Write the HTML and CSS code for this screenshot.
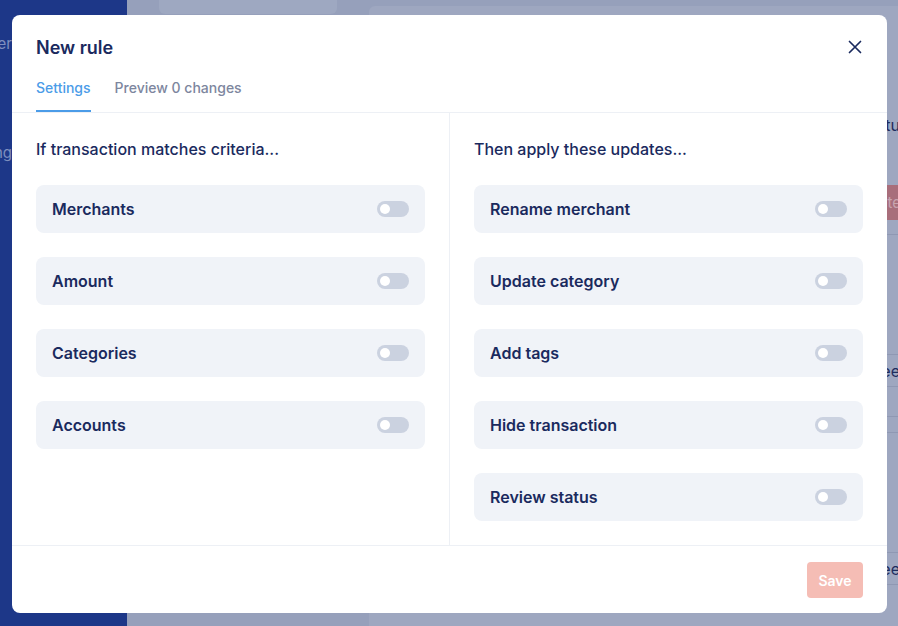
FILE: index.html
```html
<!DOCTYPE html>
<html>
<head>
<meta charset="utf-8">
<link rel="stylesheet" href="styles.css">
</head>
<body>
<div class="app">
  <aside class="sidebar">
    <div class="side-item">Transfer</div>
    <div class="side-item">Planning</div>
  </aside>
  <main class="main">
    <div class="top-panel"></div>
    <div class="content-panel">
      <div class="bg-row r1"><span class="bg-text">Statu</span></div>
      <div class="bg-row r2"><span class="bg-btn">Delete</span></div>
      <div class="bg-row r3"></div>
      <div class="bg-row r4"><span class="bg-text">Nee</span></div>
      <div class="bg-row r5"></div>
      <div class="bg-row r6"></div>
      <div class="bg-row r7"></div>
      <div class="bg-row r4"><span class="bg-text">Nee</span></div>
    </div>
  </main>
</div>

<div class="modal">
  <header class="modal-header">
    <div class="title-row">
      <h1 class="title">New rule</h1>
      <button class="close" aria-label="Close">
        <svg width="14" height="14" viewBox="0 0 14 14"><path d="M1.5 1.5 L12.5 12.5 M12.5 1.5 L1.5 12.5" stroke="#1a2a5e" stroke-width="1.7" stroke-linecap="round" fill="none"/></svg>
      </button>
    </div>
    <nav class="tabs">
      <span class="tab active">Settings</span>
      <span class="tab">Preview 0 changes</span>
    </nav>
  </header>
  <section class="modal-body">
    <div class="col">
      <h2 class="col-title">If transaction matches criteria...</h2>
      <div class="cards">
        <div class="card"><span>Merchants</span><span class="toggle"></span></div>
        <div class="card"><span>Amount</span><span class="toggle"></span></div>
        <div class="card"><span>Categories</span><span class="toggle"></span></div>
        <div class="card"><span>Accounts</span><span class="toggle"></span></div>
      </div>
    </div>
    <div class="col col-right">
      <h2 class="col-title">Then apply these updates...</h2>
      <div class="cards">
        <div class="card"><span>Rename merchant</span><span class="toggle"></span></div>
        <div class="card"><span>Update category</span><span class="toggle"></span></div>
        <div class="card"><span>Add tags</span><span class="toggle"></span></div>
        <div class="card"><span>Hide transaction</span><span class="toggle"></span></div>
        <div class="card"><span>Review status</span><span class="toggle"></span></div>
      </div>
    </div>
  </section>
  <footer class="modal-footer">
    <button class="save">Save</button>
  </footer>
</div>
</body>
</html>
```

FILE: styles.css
```css
* { box-sizing: border-box; }
html, body { margin: 0; padding: 0; }
body {
  width: 898px;
  height: 626px;
  overflow: hidden;
  font-family: Inter, "Noto Sans", sans-serif;
  background: #96a0bb;
  position: relative;
}
.app {
  display: flex;
  height: 626px;
}
.sidebar {
  width: 127px;
  flex: none;
  background: #1d3788;
  padding-top: 34px;
  display: flex;
  flex-direction: column;
  gap: 90px;
}
.side-item {
  color: #7f8fbf;
  font-size: 15px;
  line-height: 19px;
  width: 100px;
  margin-left: -88px;
  text-align: right;
}
.main {
  flex: 1;
  display: flex;
  position: relative;
  padding-left: 32px;
  gap: 32px;
}
.top-panel {
  width: 178px;
  height: 14px;
  background: #9ea8c1;
  border-radius: 0 0 6px 6px;
}
.content-panel {
  flex: 1;
  margin-top: 6px;
  background: #9ea7c0;
  border-radius: 6px 0 0 0;
  padding-top: 102px;
  display: flex;
  flex-direction: column;
}
.bg-row {
  width: 100%;
  display: flex;
  justify-content: flex-end;
  align-items: center;
  border-bottom: 1px solid #8f98b3;
  flex: none;
}
.bg-text { color: #1d2c5e; font-size: 16px; margin-right: -2px; }
.r1 { height: 34px; border-bottom: none; }
.r2 { height: 93px; align-items: flex-end; padding-bottom: 14px; }
.r2 .bg-btn {
  background: #a86e7b;
  color: #c9a5b0;
  font-size: 15px;
  line-height: 21px;
  padding: 7px 0 7px 4px;
  margin-right: -3px;
}
.r3 { height: 120px; }
.r4 { height: 32px; }
.r5 { height: 30px; }
.r6 { height: 16px; }
.r7 { height: 120px; }

/* Modal */
.modal {
  position: absolute;
  left: 12px;
  top: 15px;
  width: 875px;
  height: 598px;
  background: #fff;
  border-radius: 8px;
  display: flex;
  flex-direction: column;
  color: #1a2a5e;
}
.modal-header {
  padding: 20px 24px 0;
  border-bottom: 1px solid #edf0f5;
}
.title-row {
  display: flex;
  justify-content: space-between;
  align-items: center;
  height: 24px;
}
.title {
  margin: 0;
  font-size: 18px;
  font-weight: 600;
}
.close {
  border: none;
  background: none;
  padding: 0;
  width: 14px;
  height: 14px;
  display: flex;
  margin-right: 1px;
}
.tabs {
  display: flex;
  gap: 24px;
  margin-top: 19px;
}
.tab {
  font-size: 14px;
  font-weight: 500;
  color: #7d869e;
  line-height: 20px;
  padding-bottom: 12px;
  border-bottom: 2px solid transparent;
}
.tab.active {
  color: #4b9ce8;
  border-bottom-color: #4b9ce8;
}
.modal-body {
  flex: 1;
  display: flex;
  border-bottom: 1px solid #edf0f5;
}
.col {
  flex: 1;
  padding: 24px;
}
.col-right { border-left: 1px solid #edf0f5; }
.col-title {
  margin: 0 0 24px;
  font-size: 16px;
  font-weight: 550;
  line-height: 24px;
}
.cards {
  display: flex;
  flex-direction: column;
  gap: 24px;
}
.card {
  height: 48px;
  background: #f0f3f8;
  border-radius: 8px;
  display: flex;
  align-items: center;
  justify-content: space-between;
  padding: 0 16px;
  font-size: 16px;
  font-weight: 560;
}
.toggle {
  width: 32px;
  height: 16px;
  border-radius: 8px;
  background: #cbd2e0;
  position: relative;
}
.toggle::after {
  content: "";
  position: absolute;
  left: 3px;
  top: 3px;
  width: 10px;
  height: 10px;
  border-radius: 50%;
  background: #fff;
}
.modal-footer {
  height: 67px;
  display: flex;
  justify-content: flex-end;
  align-items: flex-start;
  padding: 16px 24px;
}
.save {
  width: 56px;
  height: 36px;
  border: none;
  border-radius: 4px;
  background: #f5bdb5;
  color: #fff;
  font-family: Inter, sans-serif;
  font-size: 14px;
  font-weight: 600;
}
```
